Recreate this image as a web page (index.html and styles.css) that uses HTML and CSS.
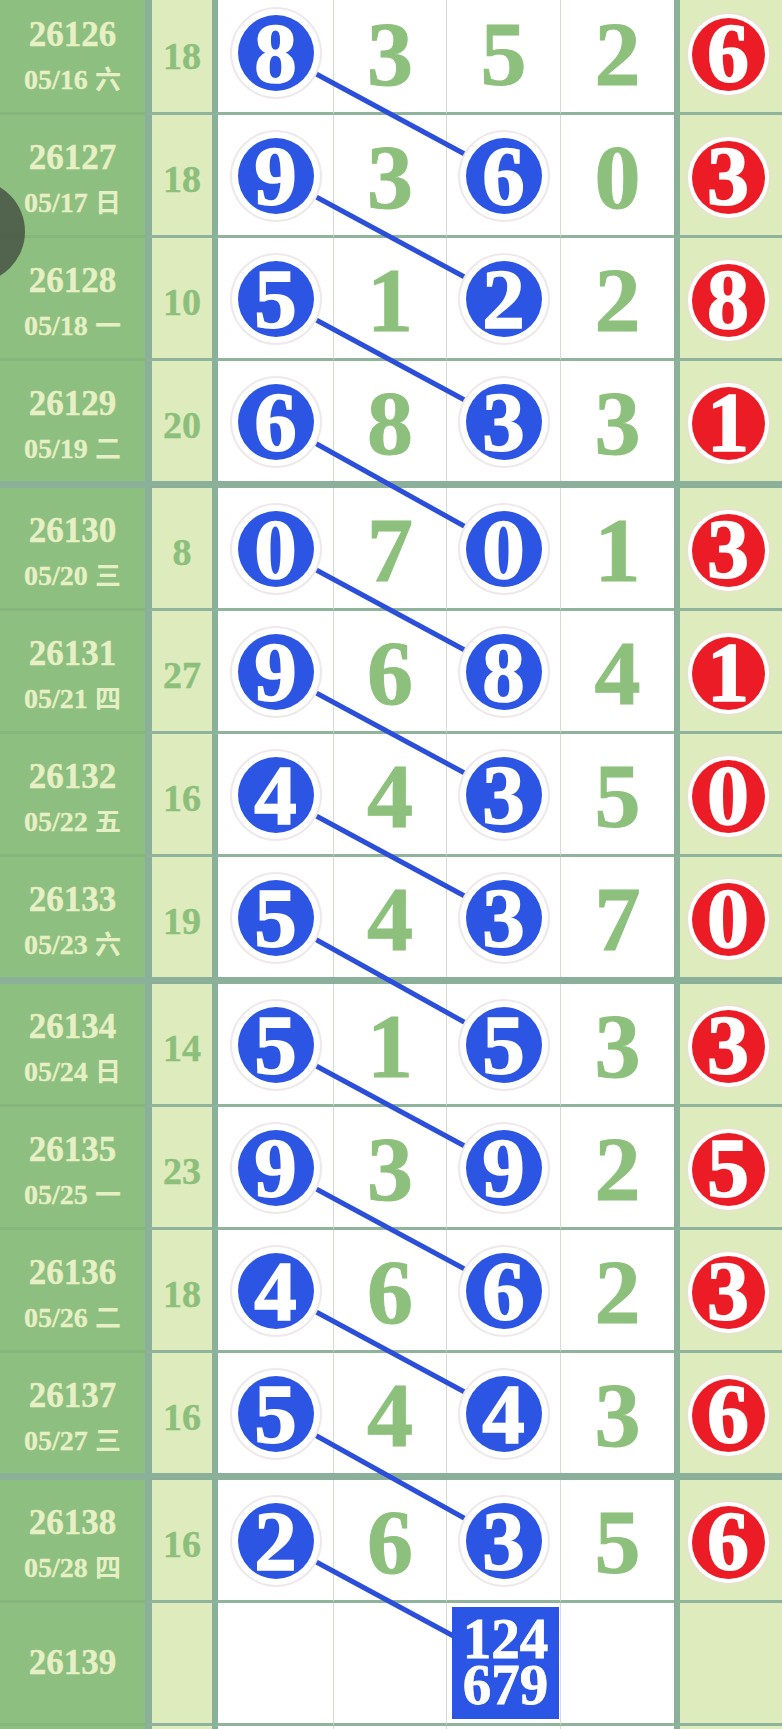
FILE: index.html
```html
<!DOCTYPE html>
<html lang="zh">
<head>
<meta charset="utf-8">
<title>走势图</title>
<link rel="stylesheet" href="styles.css">
</head>
<body>
<div class="chart">
  <svg class="links" width="782" height="1760" viewBox="0 0 782 1760">
    <g stroke="#2b4fd8" stroke-width="5" stroke-linecap="round">
      <line x1="275.5" y1="60" x2="503.5" y2="183"/>
      <line x1="275.5" y1="183" x2="503.5" y2="306"/>
      <line x1="275.5" y1="306" x2="503.5" y2="429"/>
      <line x1="275.5" y1="429" x2="503.5" y2="556"/>
      <line x1="275.5" y1="556" x2="503.5" y2="679"/>
      <line x1="275.5" y1="679" x2="503.5" y2="802"/>
      <line x1="275.5" y1="802" x2="503.5" y2="925"/>
      <line x1="275.5" y1="925" x2="503.5" y2="1052"/>
      <line x1="275.5" y1="1052" x2="503.5" y2="1175"/>
      <line x1="275.5" y1="1175" x2="503.5" y2="1298"/>
      <line x1="275.5" y1="1298" x2="503.5" y2="1421"/>
      <line x1="275.5" y1="1421" x2="503.5" y2="1548"/>
      <line x1="275.5" y1="1548" x2="503.5" y2="1671"/>
    </g>
  </svg>

  <div class="group">
    <div class="row">
      <div class="cell c1"><span class="issue">26126</span><span class="date">05/16 <span class="wk">六</span></span></div>
      <div class="cell c2">18</div>
      <div class="cell c3"><span class="ball">8</span></div>
      <div class="cell c4"><span class="num">3</span></div>
      <div class="cell c5"><span class="num">5</span></div>
      <div class="cell c6"><span class="num">2</span></div>
      <div class="cell c7"><span class="rball">6</span></div>
    </div>
    <div class="row">
      <div class="cell c1"><span class="issue">26127</span><span class="date">05/17 <span class="wk">日</span></span></div>
      <div class="cell c2">18</div>
      <div class="cell c3"><span class="ball">9</span></div>
      <div class="cell c4"><span class="num">3</span></div>
      <div class="cell c5"><span class="ball">6</span></div>
      <div class="cell c6"><span class="num">0</span></div>
      <div class="cell c7"><span class="rball">3</span></div>
    </div>
    <div class="row">
      <div class="cell c1"><span class="issue">26128</span><span class="date">05/18 <span class="wk">一</span></span></div>
      <div class="cell c2">10</div>
      <div class="cell c3"><span class="ball">5</span></div>
      <div class="cell c4"><span class="num">1</span></div>
      <div class="cell c5"><span class="ball">2</span></div>
      <div class="cell c6"><span class="num">2</span></div>
      <div class="cell c7"><span class="rball">8</span></div>
    </div>
    <div class="row">
      <div class="cell c1"><span class="issue">26129</span><span class="date">05/19 <span class="wk">二</span></span></div>
      <div class="cell c2">20</div>
      <div class="cell c3"><span class="ball">6</span></div>
      <div class="cell c4"><span class="num">8</span></div>
      <div class="cell c5"><span class="ball">3</span></div>
      <div class="cell c6"><span class="num">3</span></div>
      <div class="cell c7"><span class="rball">1</span></div>
    </div>
  </div>

  <div class="group">
    <div class="row">
      <div class="cell c1"><span class="issue">26130</span><span class="date">05/20 <span class="wk">三</span></span></div>
      <div class="cell c2">8</div>
      <div class="cell c3"><span class="ball">0</span></div>
      <div class="cell c4"><span class="num">7</span></div>
      <div class="cell c5"><span class="ball">0</span></div>
      <div class="cell c6"><span class="num">1</span></div>
      <div class="cell c7"><span class="rball">3</span></div>
    </div>
    <div class="row">
      <div class="cell c1"><span class="issue">26131</span><span class="date">05/21 <span class="wk">四</span></span></div>
      <div class="cell c2">27</div>
      <div class="cell c3"><span class="ball">9</span></div>
      <div class="cell c4"><span class="num">6</span></div>
      <div class="cell c5"><span class="ball">8</span></div>
      <div class="cell c6"><span class="num">4</span></div>
      <div class="cell c7"><span class="rball">1</span></div>
    </div>
    <div class="row">
      <div class="cell c1"><span class="issue">26132</span><span class="date">05/22 <span class="wk">五</span></span></div>
      <div class="cell c2">16</div>
      <div class="cell c3"><span class="ball">4</span></div>
      <div class="cell c4"><span class="num">4</span></div>
      <div class="cell c5"><span class="ball">3</span></div>
      <div class="cell c6"><span class="num">5</span></div>
      <div class="cell c7"><span class="rball">0</span></div>
    </div>
    <div class="row">
      <div class="cell c1"><span class="issue">26133</span><span class="date">05/23 <span class="wk">六</span></span></div>
      <div class="cell c2">19</div>
      <div class="cell c3"><span class="ball">5</span></div>
      <div class="cell c4"><span class="num">4</span></div>
      <div class="cell c5"><span class="ball">3</span></div>
      <div class="cell c6"><span class="num">7</span></div>
      <div class="cell c7"><span class="rball">0</span></div>
    </div>
  </div>

  <div class="group">
    <div class="row">
      <div class="cell c1"><span class="issue">26134</span><span class="date">05/24 <span class="wk">日</span></span></div>
      <div class="cell c2">14</div>
      <div class="cell c3"><span class="ball">5</span></div>
      <div class="cell c4"><span class="num">1</span></div>
      <div class="cell c5"><span class="ball">5</span></div>
      <div class="cell c6"><span class="num">3</span></div>
      <div class="cell c7"><span class="rball">3</span></div>
    </div>
    <div class="row">
      <div class="cell c1"><span class="issue">26135</span><span class="date">05/25 <span class="wk">一</span></span></div>
      <div class="cell c2">23</div>
      <div class="cell c3"><span class="ball">9</span></div>
      <div class="cell c4"><span class="num">3</span></div>
      <div class="cell c5"><span class="ball">9</span></div>
      <div class="cell c6"><span class="num">2</span></div>
      <div class="cell c7"><span class="rball">5</span></div>
    </div>
    <div class="row">
      <div class="cell c1"><span class="issue">26136</span><span class="date">05/26 <span class="wk">二</span></span></div>
      <div class="cell c2">18</div>
      <div class="cell c3"><span class="ball">4</span></div>
      <div class="cell c4"><span class="num">6</span></div>
      <div class="cell c5"><span class="ball">6</span></div>
      <div class="cell c6"><span class="num">2</span></div>
      <div class="cell c7"><span class="rball">3</span></div>
    </div>
    <div class="row">
      <div class="cell c1"><span class="issue">26137</span><span class="date">05/27 <span class="wk">三</span></span></div>
      <div class="cell c2">16</div>
      <div class="cell c3"><span class="ball">5</span></div>
      <div class="cell c4"><span class="num">4</span></div>
      <div class="cell c5"><span class="ball">4</span></div>
      <div class="cell c6"><span class="num">3</span></div>
      <div class="cell c7"><span class="rball">6</span></div>
    </div>
  </div>

  <div class="group">
    <div class="row">
      <div class="cell c1"><span class="issue">26138</span><span class="date">05/28 <span class="wk">四</span></span></div>
      <div class="cell c2">16</div>
      <div class="cell c3"><span class="ball">2</span></div>
      <div class="cell c4"><span class="num">6</span></div>
      <div class="cell c5"><span class="ball">3</span></div>
      <div class="cell c6"><span class="num">5</span></div>
      <div class="cell c7"><span class="rball">6</span></div>
    </div>
    <div class="row">
      <div class="cell c1 single"><span class="issue">26139</span></div>
      <div class="cell c2"></div>
      <div class="cell c3"></div>
      <div class="cell c4"></div>
      <div class="cell c5"><span class="pred"><span class="pl">124</span><span class="pl">679</span></span></div>
      <div class="cell c6"></div>
      <div class="cell c7"></div>
    </div>
    <div class="row">
      <div class="cell c1"></div>
      <div class="cell c2"></div>
      <div class="cell c3"></div>
      <div class="cell c4"></div>
      <div class="cell c5"></div>
      <div class="cell c6"></div>
      <div class="cell c7"></div>
    </div>
  </div>
</div>
<div class="float-btn"></div>
</body>
</html>
```

FILE: styles.css
```css
* { box-sizing: border-box; }

html, body {
  margin: 0;
  padding: 0;
  background: #ffffff;
  overflow: hidden;
}

body {
  width: 782px;
  height: 1729px;
  position: relative;
  font-family: "Liberation Serif", "Noto Sans CJK SC", serif;
  font-weight: bold;
}

.chart {
  position: relative;
  margin-top: -8px;
  width: 782px;
  display: flex;
  flex-direction: column;
  gap: 7px;
  background: #8bb099;
}

.links {
  position: absolute;
  top: 0;
  left: 0;
  z-index: 1;
  pointer-events: none;
}

.row {
  display: grid;
  grid-template-columns: 145px 67px 121px 113px 114px 114px 108px;
  height: 123px;
}

.row:last-child {
  height: 120px;
}

.cell {
  display: flex;
  align-items: center;
  justify-content: center;
  border-bottom: 3px solid #8fb39b;
}

.row:last-child .cell {
  border-bottom: 0;
}

.c1 {
  background: #8dbf80;
  border-bottom-color: #86b67b;
  flex-direction: column;
  justify-content: flex-start;
  padding-top: 23px;
  color: #e7f0c4;
}

.c1.single {
  justify-content: center;
  padding-top: 0;
}

.issue {
  font-size: 35px;
  line-height: 40px;
  -webkit-text-stroke: 0.4px #e7f0c4;
}

.date {
  font-size: 28px;
  line-height: 45px;
  -webkit-text-stroke: 0.3px #e7f0c4;
}

.wk {
  font-family: "Noto Sans CJK SC", sans-serif;
  font-size: 26px;
  font-weight: bold;
  -webkit-text-stroke: 0;
}

.c2 {
  background: #deebbd;
  border-left: 7px solid #8bb099;
  color: #8cbf7b;
  font-size: 38px;
  line-height: 38px;
  padding-top: 7px;
  -webkit-text-stroke: 0.4px #8cbf7b;
}

.c3, .c4, .c5, .c6 {
  background: #ffffff;
}

.c3 {
  border-left: 6px solid #8bb099;
}

.c4, .c5, .c6 {
  border-left: 1px solid #d3dbd3;
}

.c7 {
  background: #deebbd;
  border-left: 6px solid #8bb099;
}

.num {
  color: #8dc07c;
  font-size: 92px;
  line-height: 92px;
  padding-top: 4px;
  -webkit-text-stroke: 1px #8dc07c;
}

.ball {
  position: relative;
  z-index: 2;
  width: 76px;
  height: 76px;
  margin-top: 2px;
  border-radius: 50%;
  background: #2b55e2;
  box-shadow: 0 0 0 6px #ffffff, 0 0 0 8px #efe8eb;
  color: #ffffff;
  display: flex;
  align-items: center;
  justify-content: center;
  font-size: 85px;
  line-height: 85px;
  -webkit-text-stroke: 1.6px #ffffff;
}

.rball {
  position: relative;
  z-index: 2;
  width: 73px;
  height: 73px;
  margin-top: 4px;
  margin-left: -6px;
  border-radius: 50%;
  background: #ec1c26;
  box-shadow: 0 0 0 4px #ffffff, 0 0 0 6px #e6e2cc;
  color: #ffffff;
  display: flex;
  align-items: center;
  justify-content: center;
  font-size: 84px;
  line-height: 84px;
  -webkit-text-stroke: 1.6px #ffffff;
}

.pred {
  position: relative;
  z-index: 2;
  width: 107px;
  height: 112px;
  background: #2b55e4;
  color: #ffffff;
  font-size: 57px;
  display: flex;
  flex-direction: column;
  align-items: center;
  justify-content: center;
  padding-bottom: 3px;
  margin-left: 4px;
  -webkit-text-stroke: 0.8px #ffffff;
}

.pl {
  display: block;
  height: 46px;
  line-height: 46px;
  overflow: visible;
}

.float-btn {
  position: absolute;
  left: -78px;
  top: 180px;
  width: 103px;
  height: 103px;
  border-radius: 50%;
  background: rgba(50, 50, 50, 0.65);
  z-index: 5;
}
```
